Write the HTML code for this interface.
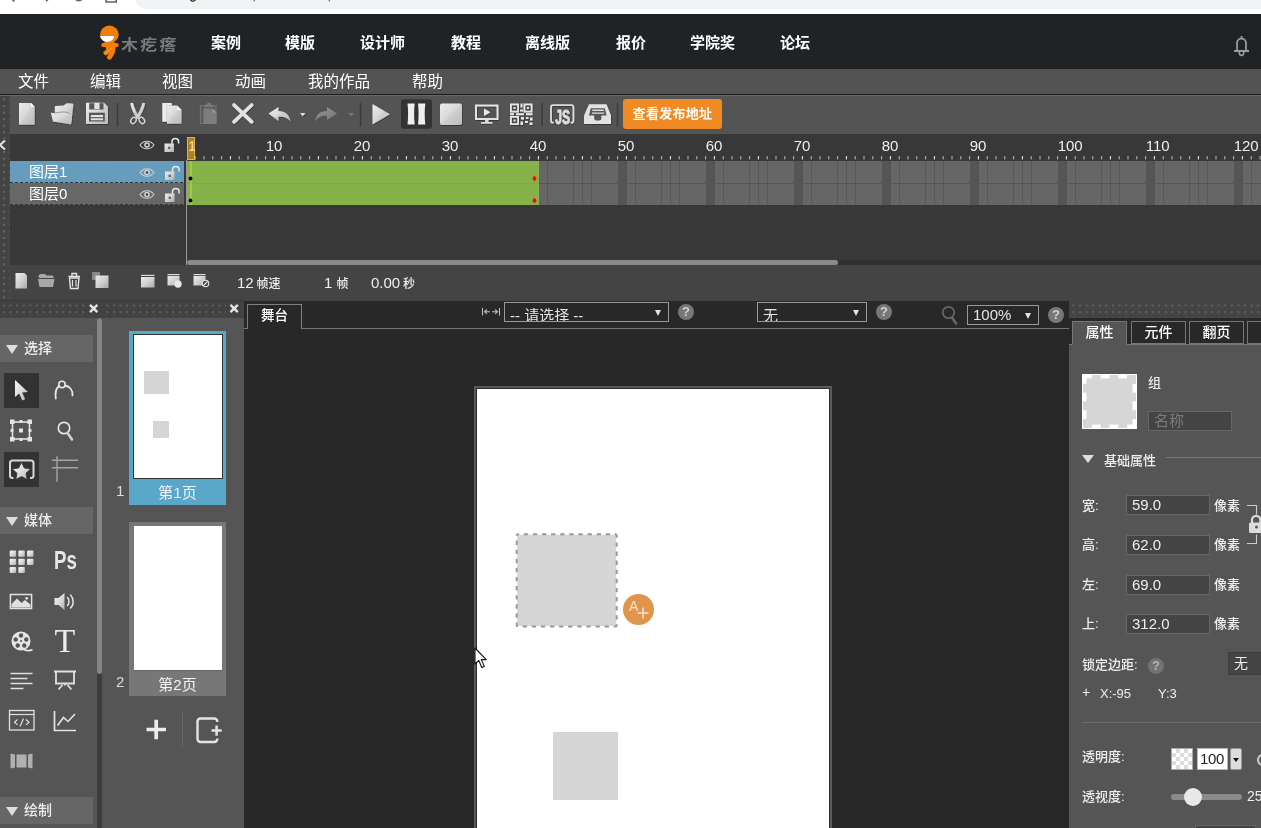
<!DOCTYPE html>
<html lang="zh-CN">
<head>
<meta charset="utf-8">
<title>木疙瘩</title>
<style>
*{box-sizing:border-box;margin:0;padding:0}
html,body{width:1261px;height:828px;overflow:hidden;background:#555}
body{font-family:"Liberation Sans","Noto Sans CJK SC",sans-serif;color:#fff;position:relative}
#app{position:absolute;left:0;top:0;width:1261px;height:828px;overflow:hidden;background:#555;will-change:transform}
.abs{position:absolute}
svg{display:block;position:absolute;overflow:visible}
/* browser strip */
#chrome{left:0;top:0;width:1261px;height:14px;background:#fff}
#urlbar{left:134px;top:-20px;width:1200px;height:29px;border-radius:14px;background:#f1f3f4}
/* nav */
#nav{left:0;top:14px;width:1261px;height:55px;background:#202326}
#nav .it{position:absolute;top:19px;font-size:15px;line-height:20px;font-weight:bold;color:#fff;white-space:nowrap}
#logo-t{position:absolute;left:120.5px;top:21px;font-size:15px;line-height:20px;font-weight:bold;color:#7a7a7a;letter-spacing:2px;white-space:nowrap;transform:scaleX(1.13);transform-origin:0 0}
/* menu */
#menu{left:0;top:69px;width:1261px;height:25px;background:#535353}
#menu .it{position:absolute;top:3px;font-size:15.5px;line-height:20px;color:#fff;white-space:nowrap}
#menuline{left:0;top:94px;width:1261px;height:2px;background:linear-gradient(#1c1c1c 0 50%,#686868 50% 100%);z-index:2}
/* toolbar */
#tb{left:0;top:95px;width:1261px;height:39px;background:#545454}
.grip{background-color:#444;background-image:radial-gradient(circle,#6c6c6c 1px,rgba(108,108,108,.35) 1.3px,transparent 1.6px);background-size:6.6px 6.6px;background-position:0.6px 1.1px}
#pub{left:623px;top:99px;width:99px;height:30px;border-radius:3px;background:#f08a24;color:#fff;font-weight:bold;font-size:13px;line-height:30px;text-align:center;letter-spacing:.3px}
/* timeline */
#tl{left:0;top:134px;width:1261px;height:166px;background:#383838}
#tlgrip{left:0;top:95px;width:10px;height:205px}
#tlbot{left:10px;top:265px;width:1251px;height:35px;background:#444}
.layer{left:10px;width:174px;height:22px;font-size:15px;line-height:22px;color:#fff;padding-left:19px}
#ly1{top:161px;background:#669dbd}
#ly0{top:183px;background:#676767}
#tldiv{left:186px;top:160px;width:1px;height:105px;background:#999}
.ruler-n{position:absolute;top:138px;font-size:15px;line-height:16px;color:#eee}
#green{left:187px;top:161px;width:352px;height:44px;background:#86b349}
#frames{left:539px;top:161px;width:722px;height:44px;background:#666}
.tlt{font-size:15px;line-height:18px;color:#eee;white-space:nowrap}
.tls{font-size:12px;line-height:14px;color:#eee;white-space:nowrap;font-weight:500}
.plbl{font-size:15px;line-height:20px;color:#f2f6f8;text-align:center}
.pnum{font-size:15px;line-height:18px;color:#ddd}
.arr{position:absolute;width:0;height:0;border-left:3.5px solid transparent;border-right:3.5px solid transparent;border-top:6px solid #e4e4e4}
.rtab{background:#282828;border:1px solid #777;font-size:14px;line-height:21px;font-weight:500;color:#fff;text-align:center}
/* strips */
.strip{background-color:#484848;background-image:radial-gradient(circle,#6c6c6c .8px,rgba(108,108,108,.3) 1.2px,transparent 1.5px);background-size:6.6px 6.6px;background-position:1px 2px}
/* lower */
#tools{left:0;top:318px;width:97px;height:510px;background:#555}
#pages{left:102px;top:318px;width:142px;height:510px;background:#555}
#stage{left:244px;top:300px;width:825px;height:528px;background:#282828}
#right{left:1069px;top:301px;width:192px;height:527px;background:#282828}
#rbody{left:1069px;top:344px;width:192px;height:484px;background:#555}
.sec{position:absolute;left:0;width:93px;height:27px;background:#666;font-size:14px;line-height:27px;color:#eee;padding-left:24px;font-weight:500}
.sec:before{content:"";position:absolute;left:6px;top:10px;border-left:6.5px solid transparent;border-right:6.5px solid transparent;border-top:9px solid #ddd}
.lbl{position:absolute;font-size:13px;line-height:16px;color:#eee;white-space:nowrap;font-weight:500}
.inp{position:absolute;background:#444;border:1px solid #666;font-size:15px;line-height:18px;color:#eee;padding-left:5px;white-space:nowrap;overflow:hidden}
.help{position:absolute;width:16px;height:16px;border-radius:50%;background:#777;color:#d2d2d2;font-size:13px;font-weight:bold;line-height:16px;text-align:center}
.sel{position:absolute;border:1px solid #999;background:#282828;font-size:15px;color:#e4e4e4;white-space:nowrap;overflow:hidden}
</style>
</head>
<body>
<div id="app">

<!-- browser strip -->
<div id="chrome" class="abs"><div id="urlbar" class="abs"></div>
<svg style="left:0;top:0" width="400" height="14" viewBox="0 0 400 14">
<path d="M11.5 -1l3 2.5M46 1.2l2.5-2.2" stroke="#5f6368" stroke-width="1.6" fill="none"/>
<path d="M74 -2a5 5 0 0 0 9.5 0z" fill="#5f6368"/>
<path d="M106.2 -2v4h10v-4" stroke="#5f6368" stroke-width="1.7" fill="none"/>
<path d="M190.5 -1c0 3 5 3 5.5 -1" stroke="#444" stroke-width="1.5" fill="none"/>
<path d="M254 1.5l1-3M329 1.5l1-3" stroke="#777" stroke-width="1.2" fill="none"/>
</svg></div>

<!-- nav -->
<div id="nav" class="abs">
  <div id="logo-t">木疙瘩</div>
  <div class="it" style="left:211px">案例</div>
  <div class="it" style="left:285px">模版</div>
  <div class="it" style="left:360px">设计师</div>
  <div class="it" style="left:451px">教程</div>
  <div class="it" style="left:525px">离线版</div>
  <div class="it" style="left:616px">报价</div>
  <div class="it" style="left:690px">学院奖</div>
  <div class="it" style="left:780px">论坛</div>
</div>


<svg style="left:95px;top:20px" width="30" height="42" viewBox="95 20 30 42">
<ellipse cx="109.4" cy="34.3" rx="9.3" ry="8.700" fill="#f07e08"/>
<path d="M100.1 36h14c0 3.3-3 5.8-7 5.8-3.6 0-6.3-2.4-7-5.8z" fill="#fff"/>
<rect x="101.2" y="43.1" width="17.6" height="4" rx="2" fill="#f07e08"/>
<path d="M104.5 42h10v3h-10z" fill="#f07e08"/>
<path d="M105.5 46.5h10c.4 5-1.6 9.5-4.7 12.8-.6.6-1.5.7-2.2.2l-1-.7c-.7-.5-.9-1.5-.4-2.2l1.8-2.8-2.3 1.3c-.7.4-1.6.3-2.1-.3l-1-1.2c-.5-.7-.4-1.6.3-2.1l2.3-1.9z" fill="#f07e08"/>
<path d="M104.5 53.5c2.5-.5 4-3.5 7.5-5.8" stroke="#fbe3c8" stroke-width=".4" fill="none"/>
</svg>
<svg style="left:1230px;top:32px" width="24" height="28" viewBox="1230 32 24 28">
<path d="M1241.5 36v2.5M1237 51v-8a4.5 4.5 0 0 1 9 0v8M1234 51h15" fill="none" stroke="#9a9a9a" stroke-width="1.8"/>
<path d="M1239.2 52c0 4.6 4.6 4.6 4.6 0" fill="none" stroke="#9a9a9a" stroke-width="1.6"/>
</svg>

<!-- menu -->
<div id="menu" class="abs">
  <div class="it" style="left:18px">文件</div>
  <div class="it" style="left:90px">编辑</div>
  <div class="it" style="left:162px">视图</div>
  <div class="it" style="left:235px">动画</div>
  <div class="it" style="left:308px">我的作品</div>
  <div class="it" style="left:412px">帮助</div>
</div>
<div id="menuline" class="abs"></div>

<!-- toolbar -->
<div id="tb" class="abs"></div>
<div id="pub" class="abs">查看发布地址</div>


<!-- toolbar icons -->
<svg id="tbsvg" style="left:0;top:95px" width="1261" height="39" viewBox="0 95 1261 39">
<defs>
<linearGradient id="g" x1="0" y1="0" x2="1" y2="1"><stop offset="0" stop-color="#ececec"/><stop offset=".45" stop-color="#dadada"/><stop offset=".55" stop-color="#cdcdcd"/><stop offset="1" stop-color="#bbb"/></linearGradient>
<linearGradient id="gd" x1="0" y1="0" x2="1" y2="1"><stop offset="0" stop-color="#9a9a9a"/><stop offset="1" stop-color="#777"/></linearGradient>
<filter id="sh" x="-20%" y="-20%" width="150%" height="150%"><feDropShadow dx="0.6" dy="0.8" stdDeviation="0.5" flood-color="#222" flood-opacity=".7"/></filter>
</defs>
<g filter="url(#sh)">
<!-- new -->
<path d="M19 103h12l3.7 3.7v18h-15.7z" fill="url(#g)"/>
<path d="M31 103v3.7h3.7z" fill="#fafafa"/>
<!-- open -->
<path d="M54.8 107c0-.7.4-1 1-1.1l7.7-.5 2.8-1.9c.5-.3 1-.4 1.7-.3l4.5.4c.7.1 1 .5.9 1.2l-2.2 19.2-16.4-8z" fill="url(#g)"/>
<path d="M50.8 112.5c2.2.8 5.2.5 7.7 0 3-.5 6-.7 8.5-.1 1.5.4 2.3 1.1 3 2l2.2-.6-1.2 10.8-18-3z" fill="url(#g)"/>
<path d="M54 113c1.8.1 3.3-.2 4.5-.5 3-.6 6-.7 8.5-.1 1.5.4 2.3 1.1 3 2.1" fill="none" stroke="#777" stroke-width=".7"/>
<!-- save -->
<path d="M86 102.8h18l4 4v17.2h-22z" fill="url(#g)"/>
<rect x="89.2" y="103.2" width="14.3" height="6.3" fill="#555"/>
<rect x="94.3" y="102.8" width="5.2" height="6.2" fill="#e2e2e2"/>
<rect x="89" y="112.7" width="15.8" height="8.8" fill="#555"/>
<rect x="90.8" y="115" width="12.3" height="2.1" fill="#e4e4e4"/>
<rect x="90.8" y="118.2" width="12.3" height="2.1" fill="#dcdcdc"/>
<!-- scissors -->
<path d="M130.2 103.2l2.8-.4c1.3 5 3.5 10 6.7 14.4l-2.5 1.8c-3.7-5-6-10.3-7-15.8z" fill="url(#g)"/>
<path d="M145.2 103.2l-2.8-.4c-1.3 5-3.5 10-6.7 14.4l2.5 1.8c3.7-5 6-10.3 7-15.8z" fill="url(#g)"/>
<ellipse cx="133.5" cy="120.5" rx="2.5" ry="3.3" fill="none" stroke="#d8d8d8" stroke-width="1.3" transform="rotate(35 133.5 120.5)"/>
<ellipse cx="141.9" cy="120.5" rx="2.5" ry="3.3" fill="none" stroke="#d8d8d8" stroke-width="1.3" transform="rotate(-35 141.9 120.5)"/>
<!-- copy -->
<path d="M162.3 103h9.5v2.5h-5v16.3h-4.5z" fill="#ececec"/>
<path d="M167 105.5h10l4.6 4.6v13.7h-14.6z" fill="url(#g)"/>
<path d="M177 105.5v4.6h4.6z" fill="#f6f6f6"/>
<!-- X -->
<path d="M234 105l17.7 16.8M251.7 105l-17.7 16.8" stroke="#e2e2e2" stroke-width="3.7" stroke-linecap="round" fill="none"/>
<!-- undo -->
<path d="M268.5 113.5l10-6.5v4c7 0 11 4 12 10.5-3-4-7-5-12-4.8v4.3z" fill="url(#g)"/>
<path d="M300 113h5.5l-2.750 3.2z" fill="#ddd"/>
<!-- play -->
<path d="M372.5 104l17.5 10.3-17.5 10.2z" fill="url(#g)"/>
<!-- stop -->
<rect x="440" y="103.5" width="22" height="21.5" rx="2" fill="url(#g)"/>
<!-- monitor -->
<path d="M476 105.5h21.5v13.5h-21.5z" fill="none" stroke="#e2e2e2" stroke-width="2"/>
<path d="M484 108.5l6.5 3.8-6.5 3.7z" fill="#e8e8e8"/>
<path d="M485 120h3.5v2h4v1.7h-11.5v-1.7h4z" fill="#d8d8d8"/>
<!-- qr -->
<g fill="none" stroke="#e6e6e6" stroke-width="1.8">
<rect x="510.9" y="104.4" width="7.2" height="7.2"/>
<rect x="524.4" y="104.4" width="7.2" height="7.2"/>
<rect x="510.9" y="116.9" width="7.2" height="7.2"/>
</g>
<g fill="#e6e6e6">
<rect x="513.5" y="107" width="2" height="2"/><rect x="527" y="107" width="2" height="2"/><rect x="513.5" y="119.5" width="2" height="2"/>
<rect x="520.5" y="103.5" width="2" height="4"/><rect x="520" y="109.5" width="3" height="2"/>
<rect x="510" y="113.2" width="4" height="2"/><rect x="516" y="113.2" width="8" height="2"/><rect x="526" y="113.2" width="6.5" height="2"/>
<rect x="521" y="117" width="3" height="2.5"/><rect x="526" y="117" width="2.5" height="2"/><rect x="530" y="117.5" width="2.5" height="3"/>
<rect x="520.5" y="121.5" width="2.5" height="3.5"/><rect x="525" y="121" width="3" height="2"/><rect x="529.5" y="122.5" width="3" height="2.5"/>
</g>
<!-- JS -->
<path d="M553.8 122.7h-.800a2 2 0 0 1-2-2v-13.5a2 2 0 0 1 2-2h18.4a2 2 0 0 1 2 2v13.5a2 2 0 0 1-2 2h-.800" fill="none" stroke="#dcdcdc" stroke-width="1.8"/>
<text transform="translate(562.7 123.6) scale(.62 1)" style="font-family:'Liberation Sans',sans-serif;font-weight:bold;font-size:19.5px" text-anchor="middle" fill="#dedede" stroke="#dedede" stroke-width=".8">JS</text>
<!-- tray -->
<path d="M589 104.3h17.5l4.5 11.1v8.6h-27v-8.6z" fill="#e2e2e2"/>
<path d="M590.8 108.3h14l1.8 7.1h-5.2v3.2a2 2 0 0 1-2 2h-3.2a2 2 0 0 1-2-2v-3.2h-5.2z" fill="#555"/>
<path d="M592.3 109.5h11.5v1.5h-11.5zM591.9 112.4h12.3v1.4h-12.3z" fill="#e0e0e0"/>
</g>
<!-- dim icons -->
<g opacity=".95">
<path d="M200.5 105.5h15.5v18h-15.5z" fill="#5c5c5c" stroke="#747474" stroke-width="1.2"/>
<path d="M204.5 105.3c1.5-.4 2.5-1 3-2.4h3c.5 1.4 1.5 2 3 2.4v1.7h-9z" fill="#7c7c7c"/>
<path d="M203.5 108.5h9l4 4v11.5h-13z" fill="#808080"/>
<path d="M212.5 108.5v4h4z" fill="#9a9a9a"/>
<path d="M315 121.5c1-6.5 5-10.5 12-10.5v-4l10 6.5-10 6.5v-4.3c-5-.2-9 .8-12 5.8z" fill="url(#gd)"/>
<path d="M348.5 113h5.5l-2.750 3.2z" fill="#7a7a7a"/>
</g>
<!-- pause -->
<rect x="401" y="99.3" width="31" height="29.5" rx="3" fill="#333"/>
<path d="M407.5 103.5h7.2c-.8 7-.8 14 0 21h-7.2c.8-7 .8-14 0-21zM418 103.5h7.3c-.8 7-.8 14 0 21h-7.3c.8-7 .8-14 0-21z" fill="#efefef"/>
<!-- separators -->
<g stroke="#3a3a3a" stroke-width="1.4">
<path d="M117.5 103v23.5M360.5 103v23.5M542 103v23.5M617.5 103v23.5"/>
</g>
</svg>

<!-- timeline -->
<div id="tl" class="abs"></div>
<svg style="left:0;top:95px" width="10" height="205" viewBox="0 95 10 205">
<defs><pattern id="dots3" width="6.6" height="6.6" patternUnits="userSpaceOnUse" patternTransform="translate(2.9 98.4)"><rect width="2" height="2" fill="#666"/></pattern></defs>
<rect x="0" y="95" width="10" height="205" fill="#444"/><rect x="0" y="96" width="10" height="204" fill="url(#dots3)"/><rect x="0" y="139" width="7" height="12" fill="#444"/></svg>
<div id="ly1" class="abs layer">图层1</div>
<div id="ly0" class="abs layer">图层0</div>
<div id="tldiv" class="abs"></div>
<div id="green" class="abs"></div>
<div id="frames" class="abs"></div>
<div id="tlbot" class="abs"></div>
<div id="ruler" class="abs" style="left:0;top:0;width:1261px;height:0"><div class="ruler-n" style="left:265.7px">10</div><div class="ruler-n" style="left:353.7px">20</div><div class="ruler-n" style="left:441.7px">30</div><div class="ruler-n" style="left:529.7px">40</div><div class="ruler-n" style="left:617.7px">50</div><div class="ruler-n" style="left:705.7px">60</div><div class="ruler-n" style="left:793.7px">70</div><div class="ruler-n" style="left:881.7px">80</div><div class="ruler-n" style="left:969.7px">90</div><div class="ruler-n" style="left:1057.7px">100</div><div class="ruler-n" style="left:1145.7px">110</div><div class="ruler-n" style="left:1233.7px">120</div></div>
<svg id="tlsvg" style="left:0;top:134px" width="1261" height="166" viewBox="0 134 1261 166">
<defs>
<linearGradient id="g2" x1="0" y1="0" x2="1" y2="1"><stop offset="0" stop-color="#ececec"/><stop offset=".5" stop-color="#d2d2d2"/><stop offset="1" stop-color="#a8a8a8"/></linearGradient>
<g id="eye"><path d="M-7 0c3.5-5 10.5-5 14 0-3.5 5-10.5 5-14 0z" fill="none" stroke="#cfcfcf" stroke-width="1.1"/><circle r="2.8" fill="#d4d4d4"/><circle r="1.3" fill="#3c3c3c"/></g>
<g id="lock"><path d="M7.5 7v-2.3a3.3 3.3 0 0 1 6.6 0v1.800" fill="none" stroke="#e8e8e8" stroke-width="1.5"/><rect x="0" y="6.5" width="9.5" height="8.5" fill="url(#g2)"/><rect x="3.7" y="9.7" width="2" height="2.3" fill="#555"/></g>
</defs>
<path d="M547.5 161v44" stroke="#575757" stroke-width="1"/><path d="M573.5 161v44" stroke="#575757" stroke-width="1"/><path d="M582.5 161v44" stroke="#575757" stroke-width="1"/><path d="M591.5 161v44" stroke="#575757" stroke-width="1"/><rect x="618" y="161" width="9" height="44" fill="#555"/><path d="M635.5 161v44" stroke="#575757" stroke-width="1"/><path d="M661.5 161v44" stroke="#575757" stroke-width="1"/><path d="M670.5 161v44" stroke="#575757" stroke-width="1"/><path d="M679.5 161v44" stroke="#575757" stroke-width="1"/><rect x="706" y="161" width="9" height="44" fill="#555"/><path d="M723.5 161v44" stroke="#575757" stroke-width="1"/><path d="M749.5 161v44" stroke="#575757" stroke-width="1"/><path d="M758.5 161v44" stroke="#575757" stroke-width="1"/><path d="M767.5 161v44" stroke="#575757" stroke-width="1"/><rect x="794" y="161" width="9" height="44" fill="#555"/><path d="M811.5 161v44" stroke="#575757" stroke-width="1"/><path d="M837.5 161v44" stroke="#575757" stroke-width="1"/><path d="M846.5 161v44" stroke="#575757" stroke-width="1"/><path d="M855.5 161v44" stroke="#575757" stroke-width="1"/><rect x="882" y="161" width="9" height="44" fill="#555"/><path d="M899.5 161v44" stroke="#575757" stroke-width="1"/><path d="M925.5 161v44" stroke="#575757" stroke-width="1"/><path d="M934.5 161v44" stroke="#575757" stroke-width="1"/><path d="M943.5 161v44" stroke="#575757" stroke-width="1"/><rect x="970" y="161" width="9" height="44" fill="#555"/><path d="M987.5 161v44" stroke="#575757" stroke-width="1"/><path d="M1013.5 161v44" stroke="#575757" stroke-width="1"/><path d="M1022.5 161v44" stroke="#575757" stroke-width="1"/><path d="M1031.5 161v44" stroke="#575757" stroke-width="1"/><rect x="1058" y="161" width="9" height="44" fill="#555"/><path d="M1075.5 161v44" stroke="#575757" stroke-width="1"/><path d="M1101.5 161v44" stroke="#575757" stroke-width="1"/><path d="M1110.5 161v44" stroke="#575757" stroke-width="1"/><path d="M1119.5 161v44" stroke="#575757" stroke-width="1"/><rect x="1146" y="161" width="9" height="44" fill="#555"/><path d="M1163.5 161v44" stroke="#575757" stroke-width="1"/><path d="M1189.5 161v44" stroke="#575757" stroke-width="1"/><path d="M1198.5 161v44" stroke="#575757" stroke-width="1"/><path d="M1207.5 161v44" stroke="#575757" stroke-width="1"/><rect x="1234" y="161" width="9" height="44" fill="#555"/><path d="M1251.5 161v44" stroke="#575757" stroke-width="1"/>
<path d="M539 183.5h722" stroke="#565656" stroke-width="1"/>
<path d="M187 183.5h352" stroke="#7eab44" stroke-width="1"/>
<path d="M191 161v44" stroke="#a6c739" stroke-width="2.2"/>
<circle cx="190.5" cy="178.5" r="1.9" fill="#000"/><circle cx="190.5" cy="200.5" r="1.9" fill="#000"/>
<path d="M534.5 175.8l2.2 2.8-2.2 2.8-2.2-2.8zM534.5 197.8l2.2 2.8-2.2 2.8-2.2-2.8z" fill="#d81010"/>
<path d="M195.2 156v3.5" stroke="#b8b8b8" stroke-width="1"/><path d="M204.0 156v3.5" stroke="#b8b8b8" stroke-width="1"/><path d="M212.8 156v3.5" stroke="#b8b8b8" stroke-width="1"/><path d="M221.6 156v3.5" stroke="#b8b8b8" stroke-width="1"/><path d="M230.4 156v3.5" stroke="#f4f4f4" stroke-width="1"/><path d="M239.2 156v3.5" stroke="#b8b8b8" stroke-width="1"/><path d="M248.0 156v3.5" stroke="#b8b8b8" stroke-width="1"/><path d="M256.8 156v3.5" stroke="#b8b8b8" stroke-width="1"/><path d="M265.6 156v3.5" stroke="#b8b8b8" stroke-width="1"/><path d="M274.4 156v3.5" stroke="#f4f4f4" stroke-width="1"/><path d="M283.2 156v3.5" stroke="#b8b8b8" stroke-width="1"/><path d="M292.0 156v3.5" stroke="#b8b8b8" stroke-width="1"/><path d="M300.8 156v3.5" stroke="#b8b8b8" stroke-width="1"/><path d="M309.6 156v3.5" stroke="#b8b8b8" stroke-width="1"/><path d="M318.4 156v3.5" stroke="#f4f4f4" stroke-width="1"/><path d="M327.2 156v3.5" stroke="#b8b8b8" stroke-width="1"/><path d="M336.0 156v3.5" stroke="#b8b8b8" stroke-width="1"/><path d="M344.8 156v3.5" stroke="#b8b8b8" stroke-width="1"/><path d="M353.6 156v3.5" stroke="#b8b8b8" stroke-width="1"/><path d="M362.4 156v3.5" stroke="#f4f4f4" stroke-width="1"/><path d="M371.2 156v3.5" stroke="#b8b8b8" stroke-width="1"/><path d="M380.0 156v3.5" stroke="#b8b8b8" stroke-width="1"/><path d="M388.8 156v3.5" stroke="#b8b8b8" stroke-width="1"/><path d="M397.6 156v3.5" stroke="#b8b8b8" stroke-width="1"/><path d="M406.4 156v3.5" stroke="#f4f4f4" stroke-width="1"/><path d="M415.2 156v3.5" stroke="#b8b8b8" stroke-width="1"/><path d="M424.0 156v3.5" stroke="#b8b8b8" stroke-width="1"/><path d="M432.8 156v3.5" stroke="#b8b8b8" stroke-width="1"/><path d="M441.6 156v3.5" stroke="#b8b8b8" stroke-width="1"/><path d="M450.4 156v3.5" stroke="#f4f4f4" stroke-width="1"/><path d="M459.2 156v3.5" stroke="#b8b8b8" stroke-width="1"/><path d="M468.0 156v3.5" stroke="#b8b8b8" stroke-width="1"/><path d="M476.8 156v3.5" stroke="#b8b8b8" stroke-width="1"/><path d="M485.6 156v3.5" stroke="#b8b8b8" stroke-width="1"/><path d="M494.4 156v3.5" stroke="#f4f4f4" stroke-width="1"/><path d="M503.2 156v3.5" stroke="#b8b8b8" stroke-width="1"/><path d="M512.0 156v3.5" stroke="#b8b8b8" stroke-width="1"/><path d="M520.8 156v3.5" stroke="#b8b8b8" stroke-width="1"/><path d="M529.6 156v3.5" stroke="#b8b8b8" stroke-width="1"/><path d="M538.4 156v3.5" stroke="#f4f4f4" stroke-width="1"/><path d="M547.2 156v3.5" stroke="#b8b8b8" stroke-width="1"/><path d="M556.0 156v3.5" stroke="#b8b8b8" stroke-width="1"/><path d="M564.8 156v3.5" stroke="#b8b8b8" stroke-width="1"/><path d="M573.6 156v3.5" stroke="#b8b8b8" stroke-width="1"/><path d="M582.4 156v3.5" stroke="#f4f4f4" stroke-width="1"/><path d="M591.2 156v3.5" stroke="#b8b8b8" stroke-width="1"/><path d="M600.0 156v3.5" stroke="#b8b8b8" stroke-width="1"/><path d="M608.8 156v3.5" stroke="#b8b8b8" stroke-width="1"/><path d="M617.6 156v3.5" stroke="#b8b8b8" stroke-width="1"/><path d="M626.4 156v3.5" stroke="#f4f4f4" stroke-width="1"/><path d="M635.2 156v3.5" stroke="#b8b8b8" stroke-width="1"/><path d="M644.0 156v3.5" stroke="#b8b8b8" stroke-width="1"/><path d="M652.8 156v3.5" stroke="#b8b8b8" stroke-width="1"/><path d="M661.6 156v3.5" stroke="#b8b8b8" stroke-width="1"/><path d="M670.4 156v3.5" stroke="#f4f4f4" stroke-width="1"/><path d="M679.2 156v3.5" stroke="#b8b8b8" stroke-width="1"/><path d="M688.0 156v3.5" stroke="#b8b8b8" stroke-width="1"/><path d="M696.8 156v3.5" stroke="#b8b8b8" stroke-width="1"/><path d="M705.6 156v3.5" stroke="#b8b8b8" stroke-width="1"/><path d="M714.4 156v3.5" stroke="#f4f4f4" stroke-width="1"/><path d="M723.2 156v3.5" stroke="#b8b8b8" stroke-width="1"/><path d="M732.0 156v3.5" stroke="#b8b8b8" stroke-width="1"/><path d="M740.8 156v3.5" stroke="#b8b8b8" stroke-width="1"/><path d="M749.6 156v3.5" stroke="#b8b8b8" stroke-width="1"/><path d="M758.4 156v3.5" stroke="#f4f4f4" stroke-width="1"/><path d="M767.2 156v3.5" stroke="#b8b8b8" stroke-width="1"/><path d="M776.0 156v3.5" stroke="#b8b8b8" stroke-width="1"/><path d="M784.8 156v3.5" stroke="#b8b8b8" stroke-width="1"/><path d="M793.6 156v3.5" stroke="#b8b8b8" stroke-width="1"/><path d="M802.4 156v3.5" stroke="#f4f4f4" stroke-width="1"/><path d="M811.2 156v3.5" stroke="#b8b8b8" stroke-width="1"/><path d="M820.0 156v3.5" stroke="#b8b8b8" stroke-width="1"/><path d="M828.8 156v3.5" stroke="#b8b8b8" stroke-width="1"/><path d="M837.6 156v3.5" stroke="#b8b8b8" stroke-width="1"/><path d="M846.4 156v3.5" stroke="#f4f4f4" stroke-width="1"/><path d="M855.2 156v3.5" stroke="#b8b8b8" stroke-width="1"/><path d="M864.0 156v3.5" stroke="#b8b8b8" stroke-width="1"/><path d="M872.8 156v3.5" stroke="#b8b8b8" stroke-width="1"/><path d="M881.6 156v3.5" stroke="#b8b8b8" stroke-width="1"/><path d="M890.4 156v3.5" stroke="#f4f4f4" stroke-width="1"/><path d="M899.2 156v3.5" stroke="#b8b8b8" stroke-width="1"/><path d="M908.0 156v3.5" stroke="#b8b8b8" stroke-width="1"/><path d="M916.8 156v3.5" stroke="#b8b8b8" stroke-width="1"/><path d="M925.6 156v3.5" stroke="#b8b8b8" stroke-width="1"/><path d="M934.4 156v3.5" stroke="#f4f4f4" stroke-width="1"/><path d="M943.2 156v3.5" stroke="#b8b8b8" stroke-width="1"/><path d="M952.0 156v3.5" stroke="#b8b8b8" stroke-width="1"/><path d="M960.8 156v3.5" stroke="#b8b8b8" stroke-width="1"/><path d="M969.6 156v3.5" stroke="#b8b8b8" stroke-width="1"/><path d="M978.4 156v3.5" stroke="#f4f4f4" stroke-width="1"/><path d="M987.2 156v3.5" stroke="#b8b8b8" stroke-width="1"/><path d="M996.0 156v3.5" stroke="#b8b8b8" stroke-width="1"/><path d="M1004.8 156v3.5" stroke="#b8b8b8" stroke-width="1"/><path d="M1013.6 156v3.5" stroke="#b8b8b8" stroke-width="1"/><path d="M1022.4 156v3.5" stroke="#f4f4f4" stroke-width="1"/><path d="M1031.2 156v3.5" stroke="#b8b8b8" stroke-width="1"/><path d="M1040.0 156v3.5" stroke="#b8b8b8" stroke-width="1"/><path d="M1048.8 156v3.5" stroke="#b8b8b8" stroke-width="1"/><path d="M1057.6 156v3.5" stroke="#b8b8b8" stroke-width="1"/><path d="M1066.4 156v3.5" stroke="#f4f4f4" stroke-width="1"/><path d="M1075.2 156v3.5" stroke="#b8b8b8" stroke-width="1"/><path d="M1084.0 156v3.5" stroke="#b8b8b8" stroke-width="1"/><path d="M1092.8 156v3.5" stroke="#b8b8b8" stroke-width="1"/><path d="M1101.6 156v3.5" stroke="#b8b8b8" stroke-width="1"/><path d="M1110.4 156v3.5" stroke="#f4f4f4" stroke-width="1"/><path d="M1119.2 156v3.5" stroke="#b8b8b8" stroke-width="1"/><path d="M1128.0 156v3.5" stroke="#b8b8b8" stroke-width="1"/><path d="M1136.8 156v3.5" stroke="#b8b8b8" stroke-width="1"/><path d="M1145.6 156v3.5" stroke="#b8b8b8" stroke-width="1"/><path d="M1154.4 156v3.5" stroke="#f4f4f4" stroke-width="1"/><path d="M1163.2 156v3.5" stroke="#b8b8b8" stroke-width="1"/><path d="M1172.0 156v3.5" stroke="#b8b8b8" stroke-width="1"/><path d="M1180.8 156v3.5" stroke="#b8b8b8" stroke-width="1"/><path d="M1189.6 156v3.5" stroke="#b8b8b8" stroke-width="1"/><path d="M1198.4 156v3.5" stroke="#f4f4f4" stroke-width="1"/><path d="M1207.2 156v3.5" stroke="#b8b8b8" stroke-width="1"/><path d="M1216.0 156v3.5" stroke="#b8b8b8" stroke-width="1"/><path d="M1224.8 156v3.5" stroke="#b8b8b8" stroke-width="1"/><path d="M1233.6 156v3.5" stroke="#b8b8b8" stroke-width="1"/><path d="M1242.4 156v3.5" stroke="#f4f4f4" stroke-width="1"/><path d="M1251.2 156v3.5" stroke="#b8b8b8" stroke-width="1"/><path d="M1260.0 156v3.5" stroke="#b8b8b8" stroke-width="1"/>
<!-- playhead -->
<rect x="187.5" y="137.5" width="7" height="22" fill="#ad8127" stroke="#e9ae3c" stroke-width="1"/>
<!-- dashed layer borders -->
<g stroke="#363636" stroke-width="1" stroke-dasharray="3 2"><path d="M10 160.5h174M10 182.5h174M10 204.5h174"/></g>
<!-- header icons -->
<use href="#eye" x="147" y="145"/><use href="#lock" x="164.5" y="137"/>
<use href="#eye" x="147" y="172.5"/><use href="#lock" x="165" y="165"/>
<use href="#eye" x="147" y="194.5"/><use href="#lock" x="165" y="187"/>
<!-- close x in grip -->
<path d="M5 140.5l-5 4.5 5 4.5" stroke="#e0e0e0" stroke-width="2.2" fill="none"/>
<!-- scrollbar -->
<rect x="187" y="260" width="1074" height="5" fill="#303030"/>
<rect x="187" y="260" width="651" height="5" rx="2.5" fill="#8a8a8a"/>
<!-- bottom icons -->
<g>
<path d="M15.5 273h9l2.5 2.5v13h-11.5z" fill="url(#g2)"/>
<path d="M38.5 277c0-2 1-3 2.5-3h4l1.5 1.5h5.5c1 0 1.5.5 1.5 1.5v1h-14zM38 279h16.5l-1.5 8h-13.5z" fill="#a8a8a8"/>
<path d="M68.5 276.5h11.5M72 276v-2.5h4.5v2.5" fill="none" stroke="#e4e4e4" stroke-width="1.4"/>
<path d="M69.5 278h9.5l-1 10.5h-7.5z" fill="none" stroke="#e4e4e4" stroke-width="1.4"/>
<path d="M72.5 280v6.5M76 280v6.5" stroke="#e4e4e4" stroke-width="1.2"/>
<rect x="92" y="272" width="8" height="8" fill="#888"/>
<rect x="95.5" y="275.5" width="13" height="12.5" fill="url(#g2)"/>
<rect x="141" y="277" width="13.5" height="10.5" fill="url(#g2)"/><rect x="141" y="274.8" width="13.5" height="1.2" fill="#ddd"/>
<rect x="167.5" y="276" width="12" height="9.5" fill="url(#g2)"/><rect x="167.5" y="274" width="12" height="1.2" fill="#ddd"/><circle cx="178" cy="284" r="3.7" fill="#e6e6e6"/>
<rect x="193.5" y="276" width="12" height="9.5" fill="url(#g2)"/><rect x="193.5" y="274" width="12" height="1.2" fill="#ddd"/><circle cx="205.5" cy="283.5" r="3.2" fill="#444" stroke="#e6e6e6" stroke-width="1.1"/><path d="M203.5 285.5l4-4" stroke="#e6e6e6" stroke-width="1.1"/>
</g>
</svg>
<div class="abs" style="left:188px;top:136px;width:7px;height:20px;font-size:15px;line-height:20px;color:#efd992;text-align:center;font-weight:bold;transform:scaleX(.8)">1</div>
<div class="abs tlt" style="left:237px;top:274px">12</div><div class="abs tls" style="left:256.5px;top:277px">帧速</div>
<div class="abs tlt" style="left:324px;top:274px">1</div><div class="abs tls" style="left:336.5px;top:277px">帧</div>
<div class="abs tlt" style="left:371px;top:274px">0.00</div><div class="abs tls" style="left:403px;top:277px">秒</div>



<!-- strips -->
<svg style="left:0;top:300px" width="244" height="18" viewBox="0 300 244 18">
<defs><pattern id="dots" width="6.6" height="6.6" patternUnits="userSpaceOnUse" patternTransform="translate(2.9 304.5)"><rect width="2" height="2" fill="#5e5e5e"/></pattern></defs>
<rect x="0" y="300" width="244" height="18" fill="#424242"/><rect x="0" y="300" width="244" height="1" fill="#3c3c3c"/>
<rect x="0" y="302" width="86" height="16" fill="url(#dots)"/><g transform="translate(-2.2 0)"><rect x="107" y="302" width="122" height="16" fill="url(#dots)"/></g>
<rect x="86" y="302" width="19.5" height="16" fill="#424242"/><rect x="226" y="302" width="18" height="16" fill="#424242"/>
<path d="M90 304.8l7.3 7.3M97.3 304.8l-7.3 7.3M230.5 304.8l7.3 7.3M237.8 304.8l-7.3 7.3" stroke="#e4e4e4" stroke-width="2.4" fill="none"/>
</svg>

<!-- tools -->
<div id="tools" class="abs">
  <div class="sec" style="top:17px">选择</div>
  <div class="sec" style="top:189px">媒体</div>
  <div class="sec" style="top:479px">绘制</div>
</div>
<div class="abs" style="left:97px;top:318px;width:5px;height:510px;background:#3c3c3c"></div>
<div class="abs" style="left:97px;top:318px;width:5px;height:356px;border-radius:2.5px;background:#848484"></div>
<svg id="toolsvg" style="left:0;top:318px" width="97" height="510" viewBox="0 318 97 510">
<defs>
<linearGradient id="g3" x1="0" y1="0" x2="1" y2="1"><stop offset="0" stop-color="#fafafa"/><stop offset=".5" stop-color="#dcdcdc"/><stop offset="1" stop-color="#b0b0b0"/></linearGradient>
</defs>
<rect x="4" y="373" width="35" height="35" fill="#333"/>
<rect x="4" y="452" width="35" height="35" fill="#333"/>
<!-- arrow -->
<path d="M15 380v17l4.2-3.5 3 7 3-1.3-3-6.8 5.8-.4z" fill="url(#g3)"/>
<!-- node tool -->
<circle cx="62" cy="384.5" r="3.2" fill="none" stroke="#e8e8e8" stroke-width="1.6"/>
<path d="M59 386c-3 2.5-4 7-3.2 12.5M65 385.5c5 1 8 5 7.5 10" fill="none" stroke="#e8e8e8" stroke-width="1.8" stroke-linecap="round"/>
<!-- transform -->
<rect x="12.5" y="422" width="17" height="17" fill="none" stroke="#e4e4e4" stroke-width="1.6"/>
<g fill="#e4e4e4"><rect x="10" y="419.5" width="4.5" height="4.5"/><rect x="27.5" y="419.5" width="4.5" height="4.5"/><rect x="10" y="437" width="4.5" height="4.5"/><rect x="27.5" y="437" width="4.5" height="4.5"/><rect x="19" y="428.5" width="4" height="4"/>
<rect x="19.5" y="420" width="3" height="3"/><rect x="19.5" y="438" width="3" height="3"/><rect x="10.5" y="429" width="3" height="3"/><rect x="28.5" y="429" width="3" height="3"/></g>
<!-- zoom -->
<circle cx="64" cy="428" r="5.7" fill="none" stroke="#e4e4e4" stroke-width="1.7"/><path d="M67.5 433l4.5 6.5" stroke="#cfcfcf" stroke-width="2.6" stroke-linecap="round"/>
<!-- star -->
<path d="M13.5 478h-1a2.5 2.5 0 0 1-2.5-2.5v-12.5a2.5 2.5 0 0 1 2.5-2.5h18.5a2.5 2.5 0 0 1 2.5 2.5v12.5a2.5 2.5 0 0 1-2.5 2.5h-1" fill="none" stroke="#d8d8d8" stroke-width="2"/>
<path d="M21.5 462.3l2.8 5.7 6.3.9-4.6 4.4 1.1 6.2-5.6-3-5.6 3 1.1-6.2-4.6-4.4 6.3-.9z" fill="url(#g3)" stroke="#333" stroke-width=".8"/>
<!-- guides -->
<path d="M57 456.3v25.5M51.8 460.2h26.2M51.8 467.7h26.2" stroke="#a4a4a4" stroke-width="1.4" fill="none"/>
<!-- media: grid -->
<g fill="url(#g3)"><rect x="9.7" y="550.5" width="6.4" height="6.2" rx="1"/><rect x="18.4" y="550.5" width="6.4" height="6.2" rx="1"/><rect x="27.1" y="550.5" width="6.4" height="6.2" rx="1"/><rect x="9.7" y="558.7" width="6.4" height="6.2" rx="1"/><rect x="18.4" y="558.7" width="6.4" height="6.2" rx="1"/><rect x="27.1" y="558.7" width="6.4" height="6.2" rx="1"/><rect x="9.7" y="566.9" width="6.4" height="6.2" rx="1"/><rect x="18.4" y="566.9" width="6.4" height="6.2" rx="1"/></g>
<!-- image -->
<rect x="10.4" y="594.5" width="21.2" height="14" fill="none" stroke="#e2e2e2" stroke-width="1.5"/>
<path d="M11.5 607.5v-3.5l5.5-5.5 4.5 4.5 3.5-3 5.5 4.5v3z" fill="#e0e0e0"/><circle cx="26.7" cy="598.3" r="1.4" fill="#e4e4e4"/>
<!-- sound -->
<path d="M54.5 598h4l6-5v17l-6-5h-4z" fill="url(#g3)"/>
<path d="M67.5 597.5c2 2 2 6 0 8M70.5 595c3.5 3.5 3.5 10 0 13" fill="none" stroke="#e4e4e4" stroke-width="1.5" stroke-linecap="round"/>
<!-- film reel -->
<circle cx="21" cy="641" r="9.5" fill="#e6e6e6"/>
<g fill="#555"><circle cx="21" cy="635.5" r="2.2"/><circle cx="15.7" cy="639.5" r="2.2"/><circle cx="26.3" cy="639.5" r="2.2"/><circle cx="17.7" cy="645.5" r="2.2"/><circle cx="24.3" cy="645.5" r="2.2"/><circle cx="21" cy="641" r="1"/></g>
<path d="M24 649.5c3 1.5 6 1.5 8.5 0" stroke="#e6e6e6" stroke-width="1.6" fill="none"/>
<!-- list -->
<path d="M10.5 673.5h22M10.5 678.5h17M10.5 683.5h22M10.5 688.5h13" stroke="#e0e0e0" stroke-width="1.5"/>
<!-- presentation -->
<path d="M54 671.5h22M56 672v11.5h18v-11.5" fill="none" stroke="#e0e0e0" stroke-width="1.8"/>
<path d="M65 684v1.5M62.5 685l-4 4.5M67.5 685l4 4.5" stroke="#e0e0e0" stroke-width="1.7" fill="none"/>
<!-- code -->
<rect x="9.5" y="710.5" width="24.5" height="19.5" fill="none" stroke="#e0e0e0" stroke-width="1.3"/><path d="M9.5 714.5h24.5" stroke="#e0e0e0" stroke-width="1.2"/>
<path d="M17.5 719.5l-3 2.7 3 2.7M26 719.5l3 2.7-3 2.7M23.5 718.5l-3.5 8" stroke="#e0e0e0" stroke-width="1.2" fill="none"/>
<!-- chart -->
<path d="M54.5 711v19.5h21.5" fill="none" stroke="#e4e4e4" stroke-width="1.7"/>
<path d="M57.5 725.5l6-8 4.5 4 7-7.5" fill="none" stroke="#e4e4e4" stroke-width="1.6"/>
<!-- panorama -->
<path d="M10.5 753.5l4.5 1v13l-4.5 1zM32.5 753.5l-4.5 1v13l4.5 1zM16.5 754.5h10v13h-10z" fill="#b0b0b0"/>
</svg>
<div class="abs" style="left:53.5px;top:545px;font-size:26px;line-height:30px;color:#e6e6e6;font-weight:bold;transform:scaleX(.72);transform-origin:0 0">Ps</div>
<div class="abs" style="left:54.5px;top:621.5px;font-family:'Liberation Serif',serif;font-size:34px;line-height:38px;color:#ececec">T</div>

<!-- pages -->
<div id="pages" class="abs"></div>
<div class="abs" style="left:129px;top:331px;width:97px;height:174px;background:#5aa8c9"></div>
<div class="abs" style="left:133px;top:334px;width:90px;height:145px;background:#fff;border:1px solid #333"></div>
<div class="abs" style="left:144px;top:371px;width:25px;height:23px;background:#d5d5d5"></div>
<div class="abs" style="left:153px;top:421px;width:16px;height:17px;background:#d5d5d5"></div>
<div class="abs plbl" style="left:129px;top:483px;width:97px">第1页</div>
<div class="abs pnum" style="left:116px;top:482px">1</div>
<div class="abs" style="left:129px;top:522px;width:97px;height:174px;background:#777"></div>
<div class="abs" style="left:133px;top:525px;width:90px;height:146px;background:#fff;border:1px solid #777;border-bottom-color:#666"></div>
<div class="abs plbl" style="left:129px;top:675px;width:97px">第2页</div>
<div class="abs pnum" style="left:116px;top:673px">2</div>
<svg style="left:102px;top:700px" width="142" height="60" viewBox="102 700 142 60">
<path d="M146.5 729.5h19.5M156.2 719.7v19.6" stroke="#ececec" stroke-width="3.7" fill="none"/>
<path d="M182.5 713v33" stroke="#686868" stroke-width="1"/>
<path d="M217.3 722v-.500a3 3 0 0 0-3-3h-13.8a3 3 0 0 0-3 3v17.5a3 3 0 0 0 3 3h13.8a3 3 0 0 0 3-3v-.500" fill="none" stroke="#e4e4e4" stroke-width="2.4"/>
<path d="M211.5 730.5h10.2M216.6 725.5v10.2" stroke="#e4e4e4" stroke-width="2.5" fill="none"/>
</svg>


<div id="stage" class="abs"></div>
<div class="abs" style="left:244px;top:296px;width:1017px;height:5px;background:#444"></div>
<!-- stage header -->
<div class="abs" style="left:244px;top:328px;width:825px;height:1px;background:#747474"></div>
<div class="abs" style="left:247px;top:304px;width:55px;height:25px;background:#282828;border:1px solid #808080;border-bottom:none;font-size:13.5px;line-height:22px;font-weight:500;text-align:center;color:#fff">舞台</div>
<svg style="left:480px;top:300px" width="480" height="28" viewBox="480 300 480 28">
<path d="M482.5 308v7.5M499.5 308v7.5M484.5 311.7h5.5M497.5 311.7h-5.5M487 309.5l-2.5 2.2 2.5 2.2M495 309.5l2.5 2.2-2.5 2.2" stroke="#bbb" stroke-width="1.1" fill="none"/>
<circle cx="948.5" cy="312.5" r="5.7" fill="none" stroke="#666" stroke-width="1.7"/><path d="M952 317.5l4 6" stroke="#666" stroke-width="2.5" stroke-linecap="round"/>
</svg>
<div class="sel" style="left:504px;top:302px;width:165px;height:20px;padding-left:5px;line-height:25px">-- 请选择 --<i class="arr" style="left:150px;top:7px"></i></div>
<div class="help" style="left:678px;top:304px">?</div>
<div class="sel" style="left:757px;top:302px;width:110px;height:20px;padding-left:5px;line-height:25px">无<i class="arr" style="left:95px;top:7px"></i></div>
<div class="help" style="left:876px;top:304px">?</div>
<div class="sel" style="left:967px;top:305px;width:72px;height:20px;padding-left:5px;line-height:17px">100%<i class="arr" style="left:57px;top:7px"></i></div>
<div class="help" style="left:1048px;top:307px">?</div>
<!-- canvas -->
<div class="abs" style="left:474px;top:386px;width:358px;height:460px;background:#fff;border:2px solid #5a5a5a;box-shadow:inset 0 0 0 1px #2c2c2c"></div>
<svg style="left:514px;top:531px" width="106" height="99" viewBox="514 531 106 99"><rect x="517.2" y="534.8" width="99" height="91.2" fill="#d5d5d5"/><rect x="516.7" y="534.3" width="100" height="92.2" rx="1.5" fill="none" stroke="#9a9a9a" stroke-width="2" stroke-dasharray="4.4 4.7" stroke-dashoffset="3.5"/></svg>
<div class="abs" style="left:553px;top:732px;width:65px;height:68px;background:#d5d5d5"></div>
<div class="abs" style="left:623px;top:593.5px;width:31px;height:31px;border-radius:50%;background:#e0954c"></div>
<div class="abs" style="left:629px;top:598px;font-size:14px;line-height:16px;color:#f8e4d0">A</div>
<svg style="left:636px;top:606px" width="14" height="14" viewBox="0 0 14 14"><path d="M1.5 7h11M7 1.5v11" stroke="#f8e4d0" stroke-width="1.5"/></svg>
<!-- cursor -->
<svg style="left:474px;top:647px" width="14" height="22" viewBox="0 0 14 22"><path d="M1 1v16l3.8-3.5 3 7 2.5-1.1-3-6.8h5z" fill="#fff" stroke="#111" stroke-width="1.1" stroke-linejoin="round"/></svg>


<div id="right" class="abs"></div>
<svg style="left:1069px;top:301px" width="192" height="17" viewBox="1069 301 192 17">
<defs><pattern id="dots2" width="6.6" height="6.6" patternUnits="userSpaceOnUse" patternTransform="translate(1072.4 304.5)"><rect width="2" height="2" fill="#5e5e5e"/></pattern></defs>
<rect x="1069" y="301" width="192" height="17" fill="#444"/><rect x="1069" y="302" width="192" height="16" fill="url(#dots2)"/></svg>
<div id="rbody" class="abs"></div>
<div class="abs" style="left:1069px;top:344px;width:192px;height:1px;background:#777"></div>
<!-- tabs -->
<div class="abs rtab" style="left:1072px;top:321px;width:55px;height:24px;background:#555;border-color:#777 #777 #555 #777;z-index:1">属性</div>
<div class="abs rtab" style="left:1131px;top:321px;width:55px;height:23px">元件</div>
<div class="abs rtab" style="left:1189px;top:321px;width:55px;height:23px">翻页</div>
<div class="abs rtab" style="left:1247px;top:321px;width:55px;height:23px"></div>
<!-- thumb -->
<svg style="left:1082px;top:374px" width="55" height="55" viewBox="1082 374 55 55"><rect x="1082" y="374" width="55" height="55" fill="#fff"/><rect x="1083" y="375" width="53" height="53" fill="#d6d6d6"/><g fill="#fff"><rect x="1083.00" y="375" width="8.83" height="3.4"/><rect x="1083" y="375.00" width="3.4" height="8.83"/><rect x="1132.6" y="383.83" width="3.4" height="8.83"/><rect x="1091.83" y="424.6" width="8.83" height="3.4"/><rect x="1100.67" y="375" width="8.83" height="3.4"/><rect x="1083" y="392.67" width="3.4" height="8.83"/><rect x="1132.6" y="401.50" width="3.4" height="8.83"/><rect x="1109.50" y="424.6" width="8.83" height="3.4"/><rect x="1118.33" y="375" width="8.83" height="3.4"/><rect x="1083" y="410.33" width="3.4" height="8.83"/><rect x="1132.6" y="419.17" width="3.4" height="8.83"/><rect x="1127.17" y="424.6" width="8.83" height="3.4"/></g></svg>
<div class="lbl" style="left:1148px;top:375px">组</div>
<div class="inp" style="left:1148px;top:411px;width:84px;height:20px;color:#7c7c7c;line-height:17px;font-size:15px">名称</div>
<!-- section -->
<div class="abs" style="left:1082px;top:455px;width:0;height:0;border-left:6px solid transparent;border-right:6px solid transparent;border-top:8.5px solid #ddd"></div>
<div class="lbl" style="left:1104px;top:453px">基础属性</div>
<div class="abs" style="left:1166px;top:457px;width:95px;height:1px;background:#7a7a7a"></div>
<div class="lbl" style="left:1082px;top:498px">宽:</div><div class="inp" style="left:1126px;top:495px;width:84px;height:20px">59.0</div><div class="lbl" style="left:1214px;top:498px">像素</div>
<div class="lbl" style="left:1082px;top:537px">高:</div><div class="inp" style="left:1126px;top:535px;width:84px;height:20px">62.0</div><div class="lbl" style="left:1214px;top:537px">像素</div>
<div class="lbl" style="left:1082px;top:577px">左:</div><div class="inp" style="left:1126px;top:575px;width:84px;height:20px">69.0</div><div class="lbl" style="left:1214px;top:577px">像素</div>
<div class="lbl" style="left:1082px;top:616px">上:</div><div class="inp" style="left:1126px;top:614px;width:84px;height:20px">312.0</div><div class="lbl" style="left:1214px;top:616px">像素</div>
<svg style="left:1244px;top:500px" width="17" height="50" viewBox="1244 500 17 50">
<path d="M1247 505.5h9.5v9M1247 543.5h9.5v-9" fill="none" stroke="#ccc" stroke-width="1.1"/>
<rect x="1249" y="522.5" width="14" height="10.5" rx="1.5" fill="#dcdcdc"/>
<path d="M1252 523v-3a4.2 4.2 0 0 1 8.4 0v3" fill="none" stroke="#dcdcdc" stroke-width="2.2"/>
<circle cx="1256.5" cy="527" r="1.5" fill="#555"/>
</svg>
<div class="lbl" style="left:1082px;top:657px">锁定边距:</div>
<div class="help" style="left:1148px;top:658px;background:#727272;color:#b4b4b4">?</div>
<div class="inp" style="left:1228px;top:652px;width:60px;height:23px;border-color:#3c3c3c;font-size:14px;line-height:21px">无</div>
<div class="lbl" style="left:1082px;top:684px;font-size:14px">+</div>
<div class="lbl" style="left:1100px;top:686px">X:-95</div>
<div class="lbl" style="left:1158px;top:686px">Y:3</div>
<div class="abs" style="left:1082px;top:722px;width:179px;height:1px;background:#6c6c6c"></div>
<div class="lbl" style="left:1082px;top:749px">透明度:</div>
<div class="abs" style="left:1171px;top:748px;width:22px;height:22px;border:1px solid #aaa;background-color:#fff;background-image:conic-gradient(#dcdcdc 25%,#fff 0 50%,#dcdcdc 0 75%,#fff 0);background-size:8px 8px"></div>
<div class="abs" style="left:1197px;top:748px;width:31px;height:22px;background:#fff;border:1px solid #bbb;color:#222;font-size:15px;line-height:20px;padding-left:2px;letter-spacing:-.3px">100</div>
<div class="abs" style="left:1230px;top:748px;width:12px;height:22px;background:#ddd;border:1px solid #999;border-radius:2px"></div>
<div class="abs" style="left:1233px;top:758px;width:0;height:0;border-left:3px solid transparent;border-right:3px solid transparent;border-top:4px solid #111"></div>
<div class="abs" style="left:1257px;top:754px;width:12px;height:12px;border-radius:50%;border:2px solid #ccc"></div>
<div class="lbl" style="left:1082px;top:789px">透视度:</div>
<div class="abs" style="left:1171px;top:794px;width:71px;height:6px;border-radius:3px;background:#8a8a8a"></div>
<div class="abs" style="left:1184px;top:788px;width:18px;height:18px;border-radius:50%;background:#e8e8e8"></div>
<div class="lbl" style="left:1247px;top:788px;font-size:14px">25</div>
<div class="inp" style="left:1195px;top:825px;width:61px;height:20px"></div>


</div>
</body>
</html>
